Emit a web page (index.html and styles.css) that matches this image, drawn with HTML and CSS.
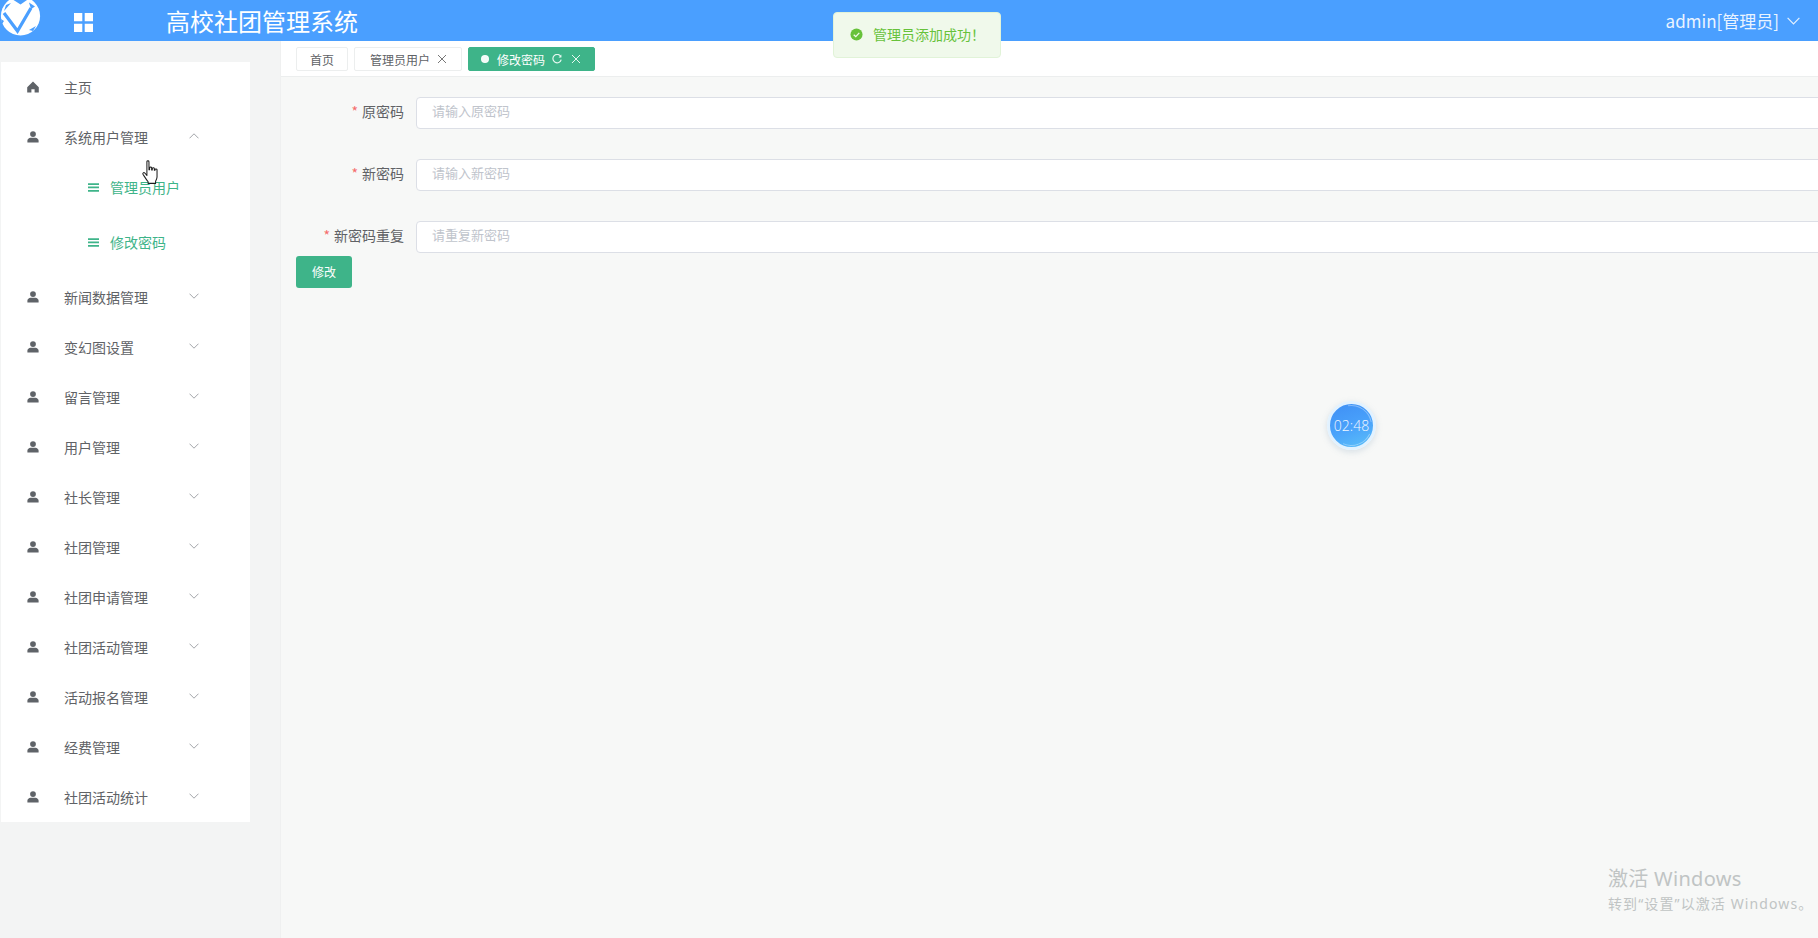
FILE: index.html
```html
<!DOCTYPE html>
<html lang="zh-CN">
<head>
<meta charset="utf-8">
<title>高校社团管理系统</title>
<link rel="stylesheet" href="styles.css">
</head>
<body>
<svg class="sprite" aria-hidden="true">
  <symbol id="person" viewBox="0 0 12 12"><circle cx="6" cy="3.1" r="2.9"/><path d="M0.4 11.4V9.6C0.4 7.9 2 7 3.4 6.7C5 6.9 7 6.9 8.6 6.7C10 7 11.6 7.9 11.6 9.6V11.4Z"/></symbol>
  <symbol id="down" viewBox="0 0 10 6"><path d="M0.5 0.7L5 5.2L9.5 0.7" fill="none" stroke="currentColor" stroke-width="0.8"/></symbol>
  <symbol id="up" viewBox="0 0 10 6"><path d="M0.5 5.3L5 0.8L9.5 5.3" fill="none" stroke="currentColor" stroke-width="0.8"/></symbol>
  <symbol id="bars" viewBox="0 0 11 9"><path d="M0 0.2H11V1.9H0ZM0 3.6H11V5.3H0ZM0 7H11V8.7H0Z"/></symbol>
  <symbol id="close" viewBox="0 0 10 10"><path d="M1 1L9 9M9 1L1 9" fill="none" stroke="currentColor" stroke-width="1"/></symbol>
</svg>

<header class="topbar">
  <svg class="logo" viewBox="0 0 41 41" aria-label="logo">
    <circle cx="20.5" cy="16" r="19.6" fill="#fff"/>
    <path d="M4 13L17.5 31L31 8" fill="none" stroke="#4a9fff" stroke-width="3.2"/>
    <path d="M13.5 0L20.5 4.5L27 0Z" fill="#4a9fff"/>
    <path d="M29 2.5L35 6.5L31 9Z" fill="#4a9fff"/>
    <path d="M6 5L11 3L4 11Z" fill="#4a9fff"/>
    <path d="M29 30L36 26L33 31Z" fill="#4a9fff"/>
    <path d="M1 19L4 21L2 24Z" fill="#4a9fff"/>
  </svg>
  <svg class="grid-icon" viewBox="0 0 19 19" aria-hidden="true"><path d="M0 0H8.3V8.3H0ZM10.7 0H19V8.3H10.7ZM0 10.7H8.3V19H0ZM10.7 10.7H19V19H10.7Z" fill="#fff"/></svg>
  <h1 class="title">高校社团管理系统</h1>
  <div class="user">
    <span>admin[管理员]</span>
    <svg class="user-caret" viewBox="0 0 13 8" aria-hidden="true"><path d="M0.6 0.8L6.5 6.8L12.4 0.8" fill="none" stroke="#e4f1ff" stroke-width="1.2"/></svg>
  </div>
</header>

<div class="layout">
  <aside class="sidebar">
    <nav class="menu">
      <a class="item">
        <svg class="item-icon" viewBox="0 0 12 12"><path d="M6 0.6L11.8 6.2V11.4H7.6V8.2H4.4V11.4H0.2V6.2Z"/></svg>
        <span class="item-label">主页</span>
      </a>
      <a class="item">
        <svg class="item-icon"><use href="#person"/></svg>
        <span class="item-label">系统用户管理</span>
        <svg class="caret"><use href="#up"/></svg>
      </a>
      <div class="submenu">
        <a class="subitem"><svg class="sub-icon"><use href="#bars"/></svg><span>管理员用户</span></a>
        <a class="subitem"><svg class="sub-icon"><use href="#bars"/></svg><span>修改密码</span></a>
      </div>
      <a class="item"><svg class="item-icon"><use href="#person"/></svg><span class="item-label">新闻数据管理</span><svg class="caret"><use href="#down"/></svg></a>
      <a class="item"><svg class="item-icon"><use href="#person"/></svg><span class="item-label">变幻图设置</span><svg class="caret"><use href="#down"/></svg></a>
      <a class="item"><svg class="item-icon"><use href="#person"/></svg><span class="item-label">留言管理</span><svg class="caret"><use href="#down"/></svg></a>
      <a class="item"><svg class="item-icon"><use href="#person"/></svg><span class="item-label">用户管理</span><svg class="caret"><use href="#down"/></svg></a>
      <a class="item"><svg class="item-icon"><use href="#person"/></svg><span class="item-label">社长管理</span><svg class="caret"><use href="#down"/></svg></a>
      <a class="item"><svg class="item-icon"><use href="#person"/></svg><span class="item-label">社团管理</span><svg class="caret"><use href="#down"/></svg></a>
      <a class="item"><svg class="item-icon"><use href="#person"/></svg><span class="item-label">社团申请管理</span><svg class="caret"><use href="#down"/></svg></a>
      <a class="item"><svg class="item-icon"><use href="#person"/></svg><span class="item-label">社团活动管理</span><svg class="caret"><use href="#down"/></svg></a>
      <a class="item"><svg class="item-icon"><use href="#person"/></svg><span class="item-label">活动报名管理</span><svg class="caret"><use href="#down"/></svg></a>
      <a class="item"><svg class="item-icon"><use href="#person"/></svg><span class="item-label">经费管理</span><svg class="caret"><use href="#down"/></svg></a>
      <a class="item"><svg class="item-icon"><use href="#person"/></svg><span class="item-label">社团活动统计</span><svg class="caret"><use href="#down"/></svg></a>
    </nav>
  </aside>

  <main class="main">
    <div class="tabs">
      <span class="tab tab-home">首页</span>
      <span class="tab">管理员用户<svg class="tab-close"><use href="#close"/></svg></span>
      <span class="tab tab-active">
        <span class="tab-dot"></span>修改密码
        <svg class="tab-refresh" viewBox="0 0 10 10"><path d="M8.8 2.6A4.2 4.2 0 1 0 9.2 5.6" fill="none" stroke="currentColor" stroke-width="1.2"/><path d="M9.4 0.6V3.4H6.6Z" fill="currentColor"/></svg>
        <svg class="tab-close tab-close-active"><use href="#close"/></svg>
      </span>
    </div>
    <form class="form">
      <div class="row"><label class="label"><i>*</i>原密码</label><input class="input" placeholder="请输入原密码"></div>
      <div class="row"><label class="label"><i>*</i>新密码</label><input class="input" placeholder="请输入新密码"></div>
      <div class="row row-last"><label class="label"><i>*</i>新密码重复</label><input class="input" placeholder="请重复新密码"></div>
      <button class="btn" type="button">修改</button>
    </form>
  </main>
</div>

<div class="toast">
  <svg class="toast-icon" viewBox="0 0 14 14"><circle cx="7" cy="7" r="6.5" fill="#67c23a"/><path d="M4 7.2L6.2 9.3L10 5.2" fill="none" stroke="#f0f9eb" stroke-width="1.4"/></svg>
  <span>管理员添加成功！</span>
</div>

<div class="timer">02:48</div>

<div class="watermark">
  <div class="wm-title">激活 Windows</div>
  <div class="wm-sub">转到“设置”以激活 Windows。</div>
</div>

<svg class="cursor" viewBox="0 0 15.2 23.2" aria-hidden="true">
  <path d="M4.6 1.6C4.6 0.4 6.6 0.4 6.6 1.6V9.4L7.2 9.4V7.6C7.4 6.6 9 6.6 9.2 7.6V9.6L9.8 9.6V8.2C10 7.2 11.6 7.2 11.8 8.2V10L12.4 10V9.2C12.6 8.4 14.2 8.4 14.4 9.4V16.4C14.4 18 13.8 19 13 20.6V22.6H5.8V21C4.4 19.4 2 15.6 0.8 13.8C0.2 12.6 1.6 11.6 2.6 12.6L4.6 15Z" fill="#fff" stroke="#1c1c1c" stroke-width="1" stroke-linejoin="round"/>
</svg>
</body>
</html>
```
FILE: styles.css
```css
* { box-sizing: border-box; }
html, body { margin: 0; height: 100%; overflow: hidden; }
body {
  display: flex;
  flex-direction: column;
  height: 938px;
  background: #f7f8f7;
  color: #606266;
  font-family: "Noto Sans CJK SC", "Noto Sans", sans-serif;
  font-size: 14px;
}
.sprite { display: none; }

.topbar {
  flex: none;
  display: flex;
  align-items: center;
  height: 41px;
  background: #4a9fff;
  color: #fff;
  overflow: hidden;
}
.logo { flex: none; width: 41px; height: 41px; }
.grid-icon { flex: none; width: 19px; height: 19px; margin: 4px 0 0 33px; }
.title { margin: 0 0 0 73px; font-size: 24px; font-weight: 400; line-height: 41px; }
.user {
  display: flex;
  align-items: center;
  margin-left: auto;
  padding-right: 18px;
  color: #eaf4ff;
  font-size: 17px;
}
.user-caret { width: 13px; height: 8px; margin-left: 8px; }

.layout { flex: 1; display: flex; min-height: 0; }
.sidebar {
  flex: none;
  width: 281px;
  padding: 21px 0 0 1px;
  background: #f3f4f4;
  border-right: 1px solid #eff0f0;
}
.menu { width: 249px; height: 760px; overflow: hidden; background: #fff; }
.item { display: flex; align-items: center; height: 50px; padding-left: 26px; }
.item-icon { flex: none; width: 12px; height: 12px; fill: #5f6368; }
.item-label { margin-left: 25px; line-height: 20px; }
.caret { width: 10px; height: 6px; margin: -3px 51px 0 auto; color: #8b8e93; }
.submenu { display: flex; flex-direction: column; gap: 5px; padding-bottom: 5px; }
.subitem { display: flex; align-items: center; height: 50px; padding-left: 87px; color: #3eb489; }
.sub-icon { flex: none; width: 11px; height: 9px; margin-right: 11px; fill: #3eb489; }

.main { flex: 1; min-width: 0; overflow: hidden; }
.tabs {
  display: flex;
  gap: 6px;
  height: 36px;
  padding: 6px 15px;
  background: #fff;
  border-bottom: 1px solid #eceeee;
}
.tab {
  display: flex;
  align-items: center;
  height: 24px;
  padding: 0 14px 0 15px;
  background: #fff;
  border: 1px solid #eceeee;
  border-radius: 2px;
  font-size: 12px;
  color: #606266;
}
.tab-home { padding: 0 13px; }
.tab-close { width: 10px; height: 10px; margin-left: 7px; color: #777; }
.tab-active { padding: 0 13px 0 12px; background: #3eb489; border-color: #3eb489; color: #fff; }
.tab-dot {
  width: 8px;
  height: 8px;
  margin-right: 8px;
  border: 1.5px solid rgba(255, 255, 255, .55);
  border-radius: 50%;
  background: #f2fbf7;
}
.tab-refresh { width: 10px; height: 10px; margin-left: 7px; color: #e6f7f0; }
.tab-close-active { margin-left: 9px; color: #e6f7f0; }

.form { padding: 20px 0 0 15px; }
.row { display: flex; align-items: center; margin-bottom: 30px; }
.row-last { margin-bottom: 3px; }
.label { flex: none; width: 108px; margin-right: 12px; padding-bottom: 4px; text-align: right; line-height: 20px; color: #606266; font-size: 14px; }
.label i { margin-right: 4px; color: #f56c6c; font-style: normal; }
.input {
  flex: none;
  width: 1500px;
  height: 32px;
  padding: 0 15px 5px;
  background: #fff;
  border: 1px solid #dcdfe6;
  border-radius: 4px;
  font: inherit;
  font-size: 13px;
  outline: 0;
}
.input::placeholder { color: #c0c4cc; opacity: 1; }
.btn {
  display: block;
  width: 56px;
  height: 32px;
  padding: 0 0 2px;
  background: #3eb489;
  border: 0;
  border-radius: 3px;
  color: #fff;
  font: inherit;
  font-size: 12px;
}

.toast {
  position: absolute;
  top: 12px;
  left: 833px;
  display: flex;
  align-items: center;
  width: 168px;
  height: 46px;
  padding: 0 0 2px 16px;
  background: #f0f9eb;
  border: 1px solid #e1f3d8;
  border-radius: 4px;
  color: #67c23a;
  font-size: 14px;
}
.toast-icon { flex: none; width: 13px; height: 13px; margin-right: 10px; }

.timer {
  position: absolute;
  top: 401px;
  left: 1327px;
  display: flex;
  align-items: center;
  justify-content: center;
  width: 49px;
  height: 49px;
  border: 3px solid #e2f2ff;
  border-radius: 50%;
  background: linear-gradient(160deg, #3f8ff5 0%, #4aa3fb 55%, #5cc0f8 100%);
  box-shadow: 0 2px 6px rgba(120, 150, 180, .25);
  color: #f2f8ff;
  font-family: "Open Sans", sans-serif;
  font-size: 14px;
  font-weight: 300;
}
.timer::before, .timer::after {
  content: "";
  position: absolute;
  inset: 1px;
  border: 1px solid transparent;
  border-radius: 50%;
}
.timer::before { border-top-color: rgba(255, 255, 255, .35); transform: rotate(35deg); }
.timer::after { border-bottom-color: rgba(255, 255, 255, .35); transform: rotate(-20deg); }

.watermark { position: absolute; top: 864px; left: 1608px; color: #c0c4c4; white-space: nowrap; }
.wm-title { font-size: 20px; line-height: 30px; letter-spacing: .3px; font-family: "Noto Sans", "Noto Sans CJK SC", sans-serif; }
.wm-sub { font-size: 14px; line-height: 20px; letter-spacing: 1.1px; font-family: "Noto Sans", "Noto Sans CJK SC", sans-serif; }

.cursor { position: absolute; top: 160px; left: 141px; width: 18px; height: 24px; }
```
